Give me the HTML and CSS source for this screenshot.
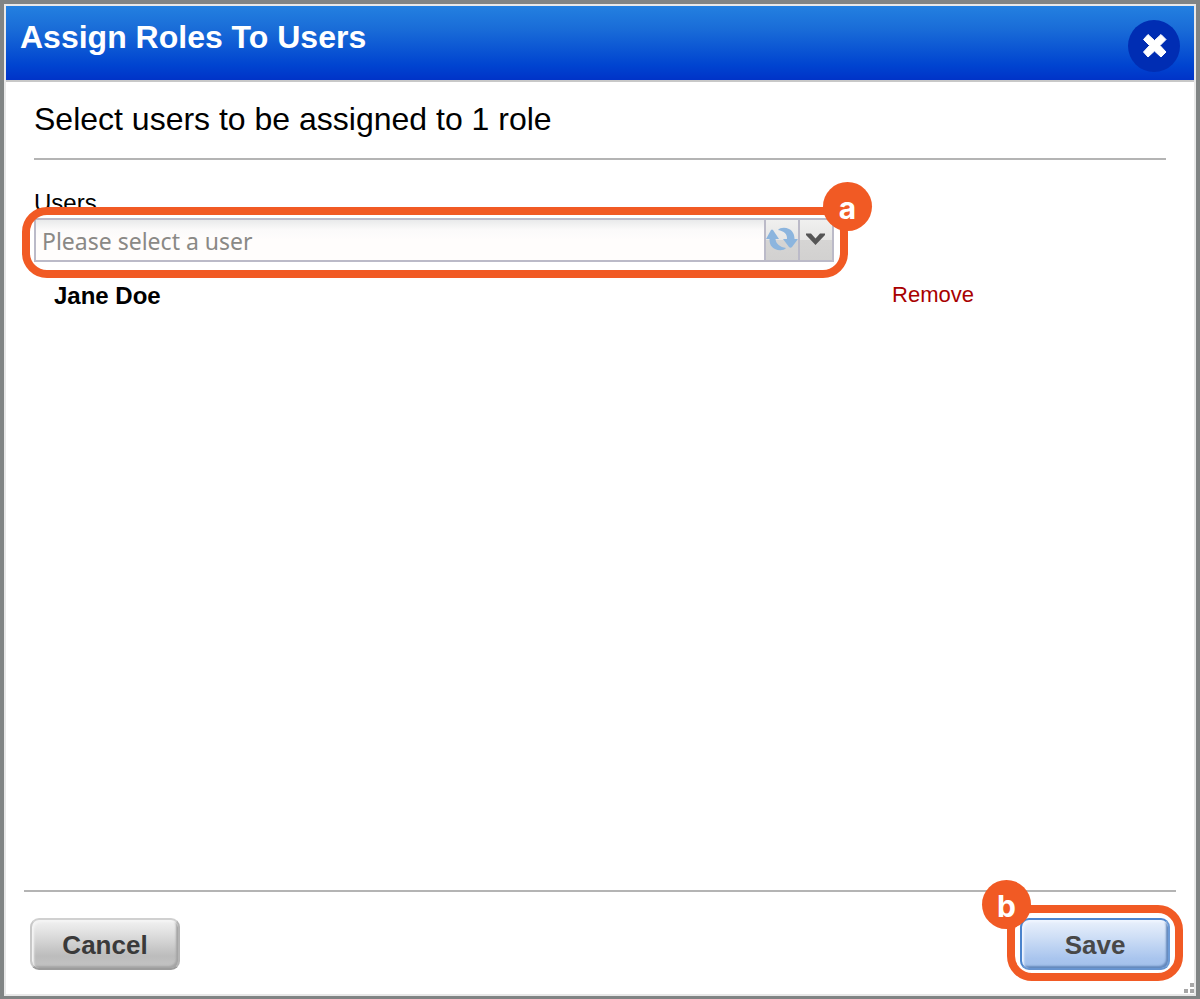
FILE: index.html
```
<!DOCTYPE html>
<html lang="en">
<head>
<meta charset="utf-8">
<title>Assign Roles To Users</title>
<link rel="stylesheet" href="styles.css">
</head>
<body>
<div class="dialog" role="dialog" aria-labelledby="dialog-title">
  <header class="titlebar">
    <h1 class="title" id="dialog-title">Assign Roles To Users</h1>
    <button class="close" type="button" aria-label="Close">
      <svg viewBox="0 0 52 52" width="52" height="52" aria-hidden="true">
        <circle cx="26" cy="26" r="26" fill="#002db3"/>
        <path d="M20 14.500L26.500 20.500L33 14.500L38 19.500L32 25.500L38 32L33 37L26.500 31L20 37L15.500 32L21.500 25.500L15.500 19.500Z" fill="#fff" stroke="#fff" stroke-width="1" stroke-linejoin="round"/>
      </svg>
    </button>
  </header>
  <main class="content">
    <h2 class="heading">Select users to be assigned to 1 role</h2>
    <label class="label" for="user">Users</label>
    <div class="field">
      <input class="field-input" id="user" type="text" placeholder="Please select a user">
      <button class="field-button" type="button" aria-label="Refresh">
        <svg viewBox="0 0 32 24" width="32" height="24" aria-hidden="true" fill="#8cb5de">
          <path d="M0 12L5 3Q6 2 7 3L13 12H9.500C10 17 14 20 20 21C18 23.500 13 24 9 22C5 20 3.500 17 3.500 12Z"/>
          <path d="M32 12L26 20Q24.500 21.500 23 20L17 12H21C21.500 7 18 4 12 3C14 .5 19 0 23 2C27 4 28.500 8 28.500 12Z"/>
        </svg>
      </button>
      <button class="field-button" type="button" aria-label="Show users">
        <svg viewBox="0 0 20 12" width="20" height="12" aria-hidden="true">
          <path d="M0 .5H5L9.500 5.500L14 .5H19V2L9.500 12L0 2Z" fill="#555"/>
        </svg>
      </button>
      <span class="ring"></span>
      <span class="badge badge-right">a</span>
    </div>
    <div class="user-row">
      <strong class="user-name">Jane Doe</strong>
      <a class="remove" href="#">Remove</a>
    </div>
  </main>
  <footer class="footer">
    <button class="button" type="button">Cancel</button>
    <div class="save">
      <button class="button button-primary" type="button">Save</button>
      <span class="ring"></span>
      <span class="badge badge-left">b</span>
    </div>
  </footer>
  <svg class="grip" viewBox="0 0 12 12" width="12" height="12" aria-hidden="true" fill="#a6a6a6">
    <path d="M7 0H11V4H7ZM1 6H5V10H1ZM7 6H11V10H7Z"/>
  </svg>
</div>
</body>
</html>
```

FILE: styles.css
```
* {
  box-sizing: border-box;
}

body {
  margin: 0;
  padding: 4px 4px 3px;
  background: #808484;
  color: #000;
  font-family: "Liberation Sans", Arial, sans-serif;
}

button {
  cursor: pointer;
}

.dialog {
  position: relative;
  display: flex;
  flex-direction: column;
  min-height: calc(100vh - 7px);
  border: 2px solid #e8e8e8;
  background: #fff;
}

.titlebar {
  display: flex;
  justify-content: space-between;
  align-items: flex-start;
  padding: 14px 14px 8px;
  border-bottom: 2px solid #c8c8c8;
  background: linear-gradient(#2380e0, #1a6dd8 30%, #0044d0 80%, #0033c8);
}

.title {
  margin: 0;
  color: #fff;
  font-size: 32px;
  line-height: 34px;
}

.close {
  height: 52px;
  padding: 0;
  border: 0;
  background: none;
}

.content {
  flex: 1;
  padding: 18px 28px;
}

.heading {
  margin: 0 0 30px;
  padding-bottom: 20px;
  border-bottom: 2px solid #b4b4b4;
  font-size: 32px;
  font-weight: 400;
  line-height: 38px;
}

.label {
  display: block;
  padding-bottom: 2px;
  font-size: 24px;
  line-height: 26px;
}

.field {
  position: relative;
  display: flex;
  max-width: 800px;
  height: 44px;
  border: 2px solid #bbbac8;
}

.field-input {
  flex: 1;
  min-width: 0;
  padding: 2px 6px 0;
  border: 0;
  background: linear-gradient(#e9eaeb, #fbfafa 10px, #fffdfc 20px);
  font-family: "Noto Sans", Tahoma, sans-serif;
  font-size: 23px;
}

.field-input::placeholder {
  color: #8a8986;
  opacity: 1;
}

.field-button {
  display: flex;
  align-items: center;
  justify-content: center;
  width: 34px;
  padding: 0 0 2px;
  border: 0;
  border-left: 2px solid #bbbac8;
  background: linear-gradient(#f0f0ef, #e6e6e5 50%, #d6d5d4 50%, #d2d1d0);
}

.ring {
  position: absolute;
  inset: -13px -16px -18px -14px;
  border: 8px solid #f15a24;
  border-radius: 25px;
  pointer-events: none;
}

.badge {
  position: absolute;
  width: 49px;
  height: 49px;
  border-radius: 50%;
  background: #f15a24;
  color: #fff;
  font-family: Inter, sans-serif;
  font-size: 30px;
  font-weight: 700;
  line-height: 52px;
  text-align: center;
}

.badge-right {
  top: -38px;
  right: -40px;
}

.badge-left {
  top: -38px;
  left: -38px;
}

.user-row {
  display: flex;
  max-width: 940px;
  justify-content: space-between;
  margin-top: 20px;
  padding-left: 20px;
  line-height: 28px;
}

.user-name {
  font-size: 24px;
}

.remove {
  color: #a80000;
  font-size: 22px;
  line-height: 26px;
  text-decoration: none;
}

.footer {
  display: flex;
  justify-content: space-between;
  margin: 0 18px;
  padding: 26px 6px 24px;
  border-top: 2px solid #b4b4b4;
}

.save {
  position: relative;
}

.save .ring {
  inset: -13px -13px -11px -13px;
}

.button {
  width: 150px;
  height: 52px;
  padding: 2px 0 0;
  border: 2px solid;
  border-color: #d0d0d0 #b4b4b4 #9c9c9c #c8c8c8;
  border-radius: 9px;
  background: linear-gradient(#f2f2f2, #dedede 30%, #bcbcbc 75%, #c4c4c4);
  box-shadow: inset 2px 2px 2px #f4f4f4, inset -2px -2px 2px #a4a4a4;
  color: #3a3a3a;
  font-family: inherit;
  font-size: 26px;
  font-weight: 700;
}

.button-primary {
  border-color: #4d86cf #6c9ad6 #6794d0 #4a83cc;
  background: linear-gradient(#eaf1fc, #cfdff6 35%, #a9c5ee 80%, #a2c0ea);
  box-shadow: inset 2px 2px 2px #eff5ff, inset -2px -2px 2px #6488bc;
  color: #484848;
}

.grip {
  position: absolute;
  right: -1px;
  bottom: -1px;
}
```
